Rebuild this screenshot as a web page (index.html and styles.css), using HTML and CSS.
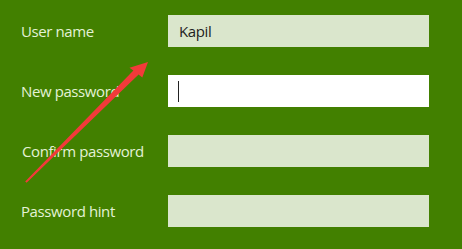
FILE: index.html
```html
<!DOCTYPE html>
<html>
<head>
<meta charset="utf-8">
<link rel="stylesheet" href="styles.css">
</head>
<body>
<div class="form">
  <div class="row"><label class="label">User name</label><div class="field">Kapil</div></div>
  <div class="row"><label class="label">New password</label><div class="field active"><span class="caret"></span></div></div>
  <div class="row"><label class="label shift">Confirm password</label><div class="field"></div></div>
  <div class="row"><label class="label">Password hint</label><div class="field"></div></div>
</div>
<svg class="arrow" width="462" height="249" viewBox="0 0 462 249">
  <polygon points="25.2,181.4 133.4,70.6 129.5,67.8 148,62 142.3,77.5 138.6,74.4 26.6,182.8" fill="#f23a3a"/>
</svg>
</body>
</html>
```
FILE: styles.css
```css
html, body {
  margin: 0;
  padding: 0;
}
body {
  width: 462px;
  height: 249px;
  background: #428000;
  overflow: hidden;
  position: relative;
  font-family: "Open Sans", "Noto Sans", sans-serif;
}
.form {
  padding: 15px 0 0 21px;
  display: flex;
  flex-direction: column;
  gap: 28px;
}
.row {
  display: flex;
  align-items: center;
  height: 32px;
}
.label {
  width: 147px;
  color: #e4f2d6;
  font-size: 15px;
  letter-spacing: -0.4px;
}
.label.shift {
  padding-left: 1px;
  width: 146px;
}
.field {
  width: 261px;
  height: 32px;
  background: #dae6cc;
  box-sizing: border-box;
  padding-left: 11px;
  display: flex;
  align-items: center;
  color: #1e1e1e;
  font-size: 15px;
  letter-spacing: -0.4px;
}
.field.active {
  background: #ffffff;
  padding-left: 10px;
}
.caret {
  width: 1px;
  height: 21px;
  background: #222;
}
.arrow {
  position: absolute;
  left: 0;
  top: 0;
}
```
